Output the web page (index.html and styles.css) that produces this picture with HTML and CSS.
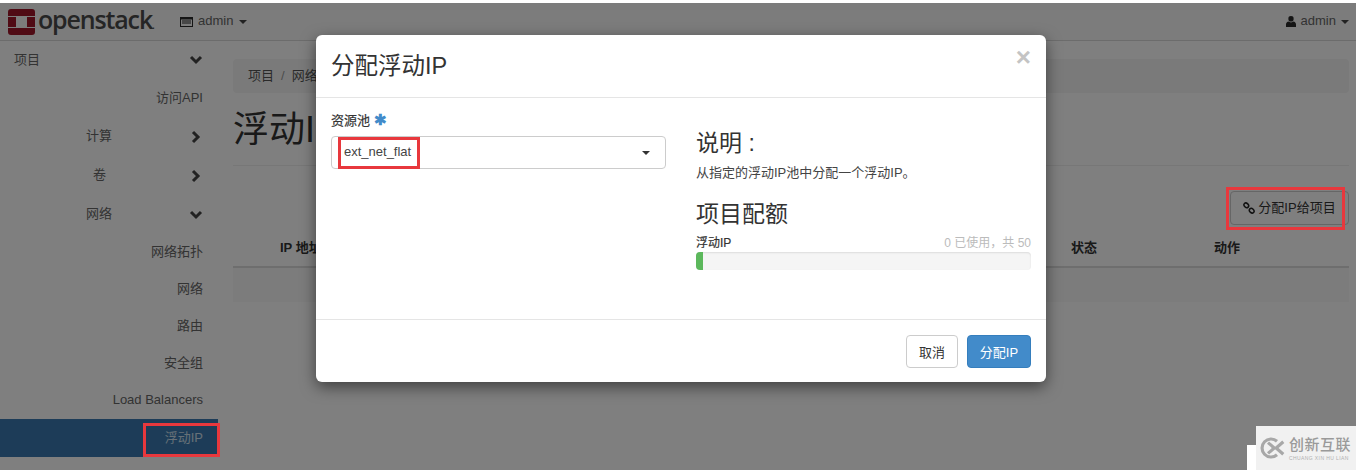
FILE: index.html
```html
<!DOCTYPE html>
<html lang="zh">
<head>
<meta charset="utf-8">
<title>浮动IP - OpenStack</title>
<link rel="stylesheet" href="styles.css">
</head>
<body>
<div class="page">
  <header class="navbar">
    <div class="brand">
      <svg class="brand-mark" viewBox="0 0 27 26" width="27" height="26">
        <path fill="#a0172a" d="M3 0H24a3 3 0 0 1 3 3V7H8V7H0V3a3 3 0 0 1 3-3ZM0 8H8V18H0ZM19 8H27V18H19ZM0 19H27V23a3 3 0 0 1-3 3H3a3 3 0 0 1-3-3Z"/>
      </svg>
      <span class="brand-name">openstack<small>.</small></span>
    </div>
    <div class="nav-project">
      <svg class="nav-icon" viewBox="0 0 13 10" width="13" height="10"><path fill="#2a2a2a" d="M0 0H13V10H0ZM1 2.500V9H12V2.500ZM2 3.500H11V4.500H2ZM2 5.500H11V6.500H2Z" fill-rule="evenodd"/></svg>
      <span>admin</span><i class="caret"></i>
    </div>
    <div class="nav-user">
      <svg class="nav-icon" viewBox="0 0 10 11" width="10" height="11"><path fill="#2a2a2a" d="M5 0a2.600 2.600 0 0 1 2.600 2.800A2.600 2.600 0 0 1 5 5.600 2.600 2.600 0 0 1 2.400 2.800 2.600 2.600 0 0 1 5 0ZM2.200 5.400 5 6.400 7.800 5.400C9.300 5.800 10 7 10 8.500V11H0V8.500C0 7 .7 5.800 2.200 5.400Z"/></svg>
      <span>admin</span><i class="caret"></i>
    </div>
  </header>
  <div class="body-row">
    <nav class="sidebar">
      <div class="side-row side-top"><span class="side-label">项目</span><svg class="chev" viewBox="0 0 14 10" width="14" height="10"><path d="M2 2l5 5 5-5" /></svg></div>
      <div class="side-row side-leaf side-api"><span>访问API</span></div>
      <div class="side-row side-group"><span>计算</span><svg class="chev chev-right" viewBox="0 0 10 14" width="10" height="14"><path d="M2 2l5 5-5 5" /></svg></div>
      <div class="side-row side-group"><span class="narrow">卷</span><svg class="chev chev-right" viewBox="0 0 10 14" width="10" height="14"><path d="M2 2l5 5-5 5" /></svg></div>
      <div class="side-row side-group"><span>网络</span><svg class="chev" viewBox="0 0 14 10" width="14" height="10"><path d="M2 2l5 5 5-5" /></svg></div>
      <div class="side-row side-leaf"><span>网络拓扑</span></div>
      <div class="side-row side-leaf"><span>网络</span></div>
      <div class="side-row side-leaf"><span>路由</span></div>
      <div class="side-row side-leaf"><span>安全组</span></div>
      <div class="side-row side-leaf"><span>Load Balancers</span></div>
      <div class="side-row side-leaf side-active"><span>浮动IP</span></div>
    </nav>
    <main class="content">
      <div class="crumbs"><span>项目</span><em>/</em><span>网络</span></div>
      <h1 class="page-title">浮动IP</h1>
      <div class="actions"><button class="btn-outline"><svg viewBox="0 0 12 12" width="12" height="12"><g fill="none" stroke="#222" stroke-width="1.500"><ellipse cx="3.300" cy="3.300" rx="2.600" ry="2" transform="rotate(45 3.300 3.300)"/><ellipse cx="8.700" cy="8.700" rx="2.600" ry="2" transform="rotate(45 8.700 8.700)"/></g></svg>分配IP给项目</button></div>
      <div class="table-head"><span class="th-ip">IP 地址</span><span class="th-status">状态</span><span class="th-action">动作</span></div>
      <div class="table-row"></div>
    </main>
  </div>
</div>

<div class="backdrop"></div>

<section class="modal">
  <header class="modal-head"><h2>分配浮动IP</h2><span class="close">×</span></header>
  <div class="modal-body">
    <div class="form-col">
      <label class="field-label">资源池 <b>✱</b></label>
      <div class="select"><span>ext_net_flat</span><i class="caret dark"></i></div>
    </div>
    <div class="help-col">
      <h3 class="help-title">说明 :</h3>
      <p class="help-text">从指定的浮动IP池中分配一个浮动IP。</p>
      <h3 class="quota-title">项目配额</h3>
      <div class="quota-line"><strong>浮动IP</strong><span>0 已使用，共 50</span></div>
      <div class="progress"><div class="progress-bar"></div></div>
    </div>
  </div>
  <footer class="modal-foot"><button class="btn-cancel">取消</button><button class="btn-primary">分配IP</button></footer>
</section>

<div class="mark mark-select"></div>
<div class="mark mark-button"></div>
<div class="mark mark-side"></div>

<div class="wm-notch"></div>
<aside class="watermark">
  <svg viewBox="0 0 30 26" width="27" height="24"><path fill="none" stroke="#a8a8a8" stroke-width="3.500" d="M20 5.500A10 10 0 1 0 20 20.500"/><path fill="none" stroke="#a8a8a8" stroke-width="3.500" d="M10 7l7 6-7 6M27 6l-8 7 8 7"/></svg>
  <div class="wm-text"><b>创新互联</b><small>CHUANG XIN HU LIAN</small></div>
</aside>
</body>
</html>
```

FILE: styles.css
```css
* { box-sizing: border-box; }
html, body { margin: 0; padding: 0; }
body {
  width: 1356px; height: 470px; overflow: hidden; position: relative;
  background: #fff; color: #333;
  font: 13px/1.4 "Liberation Sans", "Noto Sans CJK SC", sans-serif;
}
.page { padding-top: 3px; height: 470px; }
.navbar {
  height: 38px; display: flex; align-items: center;
  background: #f8f8f8; border-bottom: 1px solid #d8d8d8;
}
.brand { display: flex; align-items: center; margin-left: 8px; width: 172px; }
.brand-mark { flex: none; }
.brand-name {
  margin-left: 3px; font: 600 25px/1 "Open Sans", sans-serif; letter-spacing: -1.150px; color: #4a4a4a;
  position: relative; top: -2px;
}
.brand-name small { font-size: 10px; }
.nav-project, .nav-user { display: flex; align-items: center; gap: 5px; color: #666; font-size: 13px; }
.nav-project .caret { margin-left: 1px; }
.nav-user { margin-left: auto; margin-right: 7px; }
.nav-icon { flex: none; }
.caret {
  display: inline-block; width: 0; height: 0;
  border-top: 4px solid #444; border-left: 4px solid transparent; border-right: 4px solid transparent;
}
.body-row { display: flex; }
.sidebar { width: 218px; flex: none; }
.side-row {
  display: flex; align-items: center; justify-content: flex-end;
  padding-right: 15px; height: 37px; font-size: 13px; color: #666; position: relative;
}
.side-top { justify-content: space-between; height: 38px; padding-left: 14px; padding-right: 15px; }
.side-group { height: 39px; justify-content: flex-start; padding-left: 86px; }
.side-group .narrow { margin-left: 7px; }
.side-group .chev { position: absolute; right: 15px; }
.side-group .chev-right { right: 17px; }
.side-leaf { height: 37px; }
.side-api { height: 38px; }
.side-active { background: #3a78b0; color: #cfe0ef; height: 38px; }
.chev { flex: none; }
.chev path { fill: none; stroke: #444; stroke-width: 3; stroke-linecap: butt; }
.content { flex: 1; padding: 18px 7px 0 15px; min-width: 0; }
.crumbs {
  height: 34px; background: #f5f5f5; border-radius: 4px; display: flex; align-items: center;
  padding-left: 15px; gap: 7px; color: #555;
}
.crumbs em { font-style: normal; color: #999; }
.page-title {
  margin: 0; height: 73px; border-bottom: 1px solid #eee; font-weight: 400; font-size: 36px; line-height: 73px; color: #333;
}
.actions { display: flex; justify-content: flex-end; padding-top: 25px; height: 57px; }
.btn-outline {
  width: 119px; height: 34px; background: #fff; border: 1px solid #ccc; border-radius: 4px;
  display: flex; align-items: center; justify-content: center; gap: 3px; padding: 0; font: inherit; color: #333;
}
.table-head {
  height: 45px; border-bottom: 2px solid #ddd; font-weight: 700; color: #333;
  display: grid; grid-template-columns: 791px 143px 1fr; align-items: center; padding: 7px 0 0 47px;
}
.table-row { height: 34px; background: #f9f9f9; }
.backdrop { position: absolute; inset: 3px 0 0 0; background: rgba(0, 0, 0, .5); }
.modal {
  position: absolute; left: 316px; top: 35px; width: 730px; height: 347px;
  background: #fff; border-radius: 6px; box-shadow: 0 5px 15px rgba(0, 0, 0, .5);
  display: flex; flex-direction: column;
}
.modal-head {
  height: 63px; flex: none; border-bottom: 1px solid #e5e5e5; display: flex; justify-content: space-between;
  padding: 0 15px;
}
.modal-head h2 { margin: 0; font-size: 23.500px; font-weight: 400; line-height: 62px; color: #333; }
.close { font: 700 26px/44px "Liberation Sans", sans-serif; color: #c4c4c4; }
.modal-body { flex: 1; display: flex; padding: 14px 15px 0; }
.form-col { width: 335px; flex: none; }
.field-label { display: flex; align-items: flex-start; gap: 4px; height: 24px; line-height: 18px; font-size: 13px; color: #333; -webkit-text-stroke: .2px #333; }
.field-label b { color: #428bca; font-size: 15px; line-height: 15px; font-weight: 700; -webkit-text-stroke: 0; }
.select {
  height: 33px; border: 1px solid #ccc; border-radius: 4px; display: flex; align-items: center;
  justify-content: space-between; padding: 0 15px 0 12px; color: #444; font-size: 13px;
}
.caret.dark { border-top-color: #333; }
.help-col { width: 335px; margin-left: 30px; padding-top: 17px; }
.help-title, .quota-title { margin: 0; font-size: 23px; font-weight: 400; line-height: 28px; color: #333; }
.help-text { margin: 6px 0 0; font-size: 13px; line-height: 20px; color: #444; }
.quota-title { margin-top: 15px; line-height: 32px; }
.quota-line { display: flex; justify-content: space-between; align-items: center; height: 18px; font-size: 12px; margin-top: 4px; }
.quota-line strong { font-weight: 400; color: #333; -webkit-text-stroke: .2px #333; }
.quota-line span { color: #bbb; }
.progress { height: 18px; background: #f5f5f5; border-radius: 4px; overflow: hidden; box-shadow: inset 0 1px 2px rgba(0,0,0,.1); }
.progress-bar { width: 7px; height: 100%; background: #5cb85c; }
.modal-foot {
  height: 63px; flex: none; border-top: 1px solid #e5e5e5; display: flex; justify-content: flex-end;
  align-items: flex-start; gap: 9px; padding: 15px 15px 0;
}
.btn-cancel, .btn-primary { height: 33px; border-radius: 4px; font: 13px "Liberation Sans", "Noto Sans CJK SC", sans-serif; padding: 0; }
.btn-cancel { width: 52px; background: #fff; border: 1px solid #ccc; color: #333; }
.btn-primary { width: 64px; background: #428bca; border: 1px solid #357ebd; color: #fff; }
.mark { position: absolute; border: 3px solid #e8383d; }
.mark-select { left: 338px; top: 137px; width: 82px; height: 32px; }
.mark-button { left: 1226px; top: 187px; width: 119px; height: 43px; }
.mark-side { left: 143px; top: 423px; width: 77px; height: 34px; }
.wm-notch { position: absolute; left: 1247px; top: 445px; width: 12px; height: 25px; background: #fff; }
.watermark {
  position: absolute; left: 1256px; top: 426px; width: 100px; height: 44px; background: #f1f1f1;
  display: flex; align-items: center; gap: 3px; padding: 0 0 0 3px;
}
.wm-text { display: flex; flex-direction: column; }
.wm-text b { font-size: 15px; font-weight: 500; line-height: 17px; color: #9a9a9a; letter-spacing: .5px; white-space: nowrap; }
.wm-text small { font-size: 5px; line-height: 6px; margin-top: 2px; color: #b0b0b0; letter-spacing: .4px; white-space: nowrap; }
```
